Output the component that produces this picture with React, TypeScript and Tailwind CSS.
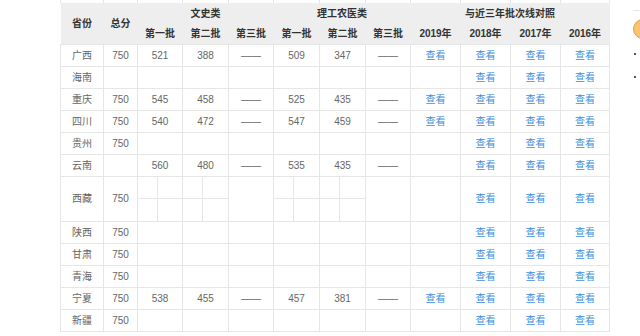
import React from "react";

type Row = {
  name: string;
  total?: string;
  wen: [string, string, string] | null;
  li: [string, string, string] | null;
  y2019: boolean;
  tall?: boolean;
};

const ROWS: Row[] = [
  { name: "广西", total: "750", wen: ["521", "388", "——"], li: ["509", "347", "——"], y2019: true },
  { name: "海南", wen: null, li: null, y2019: false },
  { name: "重庆", total: "750", wen: ["545", "458", "——"], li: ["525", "435", "——"], y2019: true },
  { name: "四川", total: "750", wen: ["540", "472", "——"], li: ["547", "459", "——"], y2019: true },
  { name: "贵州", total: "750", wen: null, li: null, y2019: false },
  { name: "云南", wen: ["560", "480", "——"], li: ["535", "435", "——"], y2019: false },
  { name: "西藏", total: "750", wen: null, li: null, y2019: false, tall: true },
  { name: "陕西", total: "750", wen: null, li: null, y2019: false },
  { name: "甘肃", total: "750", wen: null, li: null, y2019: false },
  { name: "青海", total: "750", wen: null, li: null, y2019: false },
  { name: "宁夏", total: "750", wen: ["538", "455", "——"], li: ["457", "381", "——"], y2019: true },
  { name: "新疆", total: "750", wen: null, li: null, y2019: false },
];

const WIDTHS = [43, 34, 45, 46, 45, 46, 46, 45, 50, 50, 50, 49];
const td = "border border-[#e6e6e6] p-0 text-center align-middle";

function Split() {
  return (
    <div className="grid h-full grid-cols-[20px_1fr] grid-rows-2">
      <div className="border-b border-r border-[#e6e6e6]" />
      <div className="border-b border-[#e6e6e6]" />
      <div className="border-r border-[#e6e6e6]" />
      <div />
    </div>
  );
}

function Link() {
  return <span className="text-[#3d8fe0]">查看</span>;
}

export default function App() {
  return (
    <div
      className="grid h-[336px] w-[640px] grid-cols-[60px_550px_23px_7px] items-start overflow-hidden bg-white text-[10px] text-[#666]"
      style={{ fontFamily: '"Liberation Sans", "Noto Sans CJK SC", sans-serif' }}
    >
      <div />
      <table className="w-[550px] table-fixed border-collapse">
        <colgroup>
          {WIDTHS.map((w, i) => (
            <col key={i} style={{ width: w }} />
          ))}
        </colgroup>
        <tbody>
          {/* tail of the previous table rows */}
          <tr className="h-[3px]">
            {WIDTHS.map((_, i) => (
              <td key={i} className="border-x border-[#e6e6e6] p-0" />
            ))}
          </tr>
          <tr className="h-[21px] bg-[#eeeeee] font-bold text-[#333]">
            <td rowSpan={2} className="border-[#eeeeee] p-0 pt-[1px] text-center">省份</td>
            <td rowSpan={2} className="border-[#eeeeee] p-0 pt-[1px] text-center">总分</td>
            <td colSpan={3} className="border-[#eeeeee] p-0 text-center">文史类</td>
            <td colSpan={3} className="border-[#eeeeee] p-0 text-center">理工农医类</td>
            <td colSpan={4} className="border-[#eeeeee] p-0 text-center">与近三年批次线对照</td>
          </tr>
          <tr className="h-[20px] bg-[#eeeeee] font-bold text-[#333]">
            {["第一批", "第二批", "第三批", "第一批", "第二批", "第三批", "2019年", "2018年", "2017年", "2016年"].map((h, i) => (
              <td key={i} className="border-[#eeeeee] p-0 text-center">{h}</td>
            ))}
          </tr>
          {ROWS.map((r) => (
            <tr key={r.name} className={r.tall ? "h-[45px]" : "h-[22px]"}>
              <td className={td}>{r.name}</td>
              <td className={td}>{r.total ?? ""}</td>
              {r.tall ? (
                <>
                  <td className={`${td} h-[45px]`}><Split /></td>
                  <td className={`${td} h-[45px]`}><Split /></td>
                  <td className={td} />
                  <td className={`${td} h-[45px]`}><Split /></td>
                  <td className={`${td} h-[45px]`}><Split /></td>
                  <td className={td} />
                </>
              ) : (
                <>
                  {[0, 1, 2].map((i) => (
                    <td key={`w${i}`} className={td}>{r.wen ? r.wen[i] : ""}</td>
                  ))}
                  {[0, 1, 2].map((i) => (
                    <td key={`l${i}`} className={td}>{r.li ? r.li[i] : ""}</td>
                  ))}
                </>
              )}
              <td className={td}>{r.y2019 ? <Link /> : null}</td>
              <td className={td}><Link /></td>
              <td className={td}><Link /></td>
              <td className={td}><Link /></td>
            </tr>
          ))}
        </tbody>
      </table>
      <div />

      {/* sidebar edge, cut off by the window */}
      <div className="overflow-hidden pt-[10px]">
        <div className="w-[40px] border-t border-[#e6e6e6]" />
        <div className="mt-[8px] h-[20px] w-[20px] rounded-full border border-[#d9a04e] bg-[#fcc36e]" />
        <div className="mt-[14px] flex flex-col gap-[21px] pl-[1px]">
          <div className="h-[2px] w-[2px] bg-[#555]" />
          <div className="h-[2px] w-[2px] bg-[#555]" />
        </div>
      </div>
    </div>
  );
}
